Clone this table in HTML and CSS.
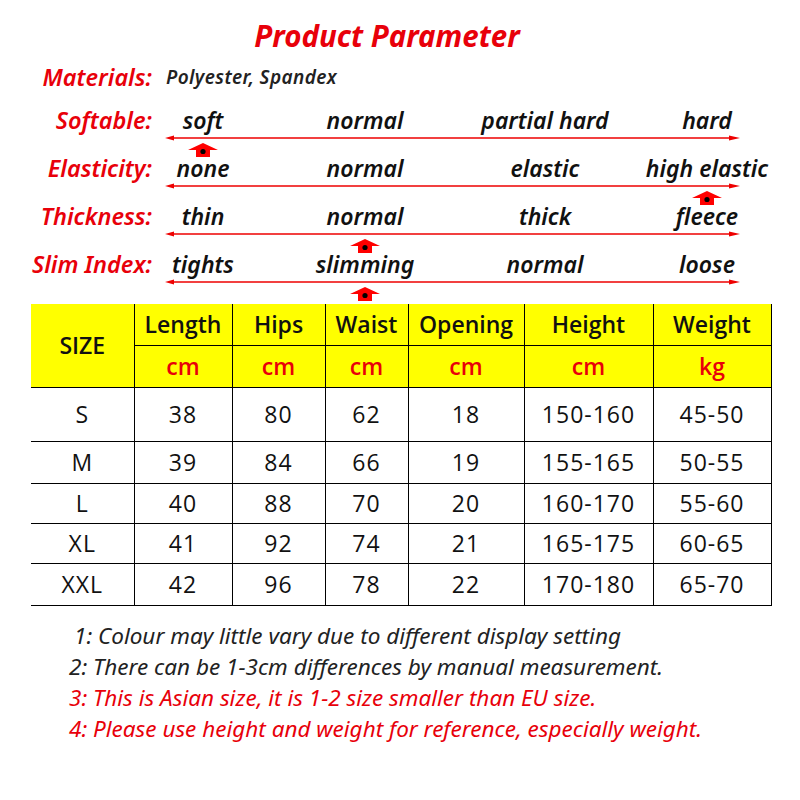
FILE: index.html
```html
<!DOCTYPE html>
<html>
<head>
<meta charset="utf-8">
<link rel="stylesheet" href="styles.css">
</head>
<body>
<div class="page">
  <h1 class="title">Product Parameter</h1>

  <div class="mat-row">
    <span class="label">Materials:</span>
    <span class="mat-value">Polyester, Spandex</span>
  </div>

  <div class="scales">
  <div class="scale-row">
    <span class="label">Softable:</span>
    <span class="val c2">soft</span>
    <span class="val c3">normal</span>
    <span class="val c4">partial hard</span>
    <span class="val c5">hard</span>
    <svg class="axis" viewBox="0 0 575 8" width="575" height="8"><line x1="6" y1="4" x2="566" y2="4" stroke="#e00" stroke-width="1.5"/><path d="M0 4 L9 1.5 L9 6.5 Z" fill="#e00"/><path d="M575 4 L564 1.5 L564 6.5 Z" fill="#e00"/></svg>
    <svg class="marker c2" viewBox="0 0 30 14" width="30" height="14"><path d="M15 0 L30 7 L22 7 L22 14 L8 14 L8 7 L0 7 Z" fill="#f00"/><circle cx="15" cy="8.5" r="2.6" fill="#000"/></svg>
  </div>

  <div class="scale-row">
    <span class="label">Elasticity:</span>
    <span class="val c2">none</span>
    <span class="val c3">normal</span>
    <span class="val c4">elastic</span>
    <span class="val c5">high elastic</span>
    <svg class="axis" viewBox="0 0 575 8" width="575" height="8"><line x1="6" y1="4" x2="566" y2="4" stroke="#e00" stroke-width="1.5"/><path d="M0 4 L9 1.5 L9 6.5 Z" fill="#e00"/><path d="M575 4 L564 1.5 L564 6.5 Z" fill="#e00"/></svg>
    <svg class="marker c5" viewBox="0 0 30 14" width="30" height="14"><path d="M15 0 L30 7 L22 7 L22 14 L8 14 L8 7 L0 7 Z" fill="#f00"/><circle cx="15" cy="8.5" r="2.6" fill="#000"/></svg>
  </div>

  <div class="scale-row">
    <span class="label">Thickness:</span>
    <span class="val c2">thin</span>
    <span class="val c3">normal</span>
    <span class="val c4">thick</span>
    <span class="val c5">fleece</span>
    <svg class="axis" viewBox="0 0 575 8" width="575" height="8"><line x1="6" y1="4" x2="566" y2="4" stroke="#e00" stroke-width="1.5"/><path d="M0 4 L9 1.5 L9 6.5 Z" fill="#e00"/><path d="M575 4 L564 1.5 L564 6.5 Z" fill="#e00"/></svg>
    <svg class="marker c3" viewBox="0 0 30 14" width="30" height="14"><path d="M15 0 L30 7 L22 7 L22 14 L8 14 L8 7 L0 7 Z" fill="#f00"/><circle cx="15" cy="8.5" r="2.6" fill="#000"/></svg>
  </div>

  <div class="scale-row">
    <span class="label">Slim Index:</span>
    <span class="val c2">tights</span>
    <span class="val c3">slimming</span>
    <span class="val c4">normal</span>
    <span class="val c5">loose</span>
    <svg class="axis" viewBox="0 0 575 8" width="575" height="8"><line x1="6" y1="4" x2="566" y2="4" stroke="#e00" stroke-width="1.5"/><path d="M0 4 L9 1.5 L9 6.5 Z" fill="#e00"/><path d="M575 4 L564 1.5 L564 6.5 Z" fill="#e00"/></svg>
    <svg class="marker c3" viewBox="0 0 30 14" width="30" height="14"><path d="M15 0 L30 7 L22 7 L22 14 L8 14 L8 7 L0 7 Z" fill="#f00"/><circle cx="15" cy="8.5" r="2.6" fill="#000"/></svg>
  </div>
  </div>

  <table class="size-table">
    <colgroup>
      <col class="w1"><col class="w2"><col class="w3"><col class="w4"><col class="w5"><col class="w6"><col class="w7">
    </colgroup>
    <thead>
      <tr class="h1">
        <th rowspan="2">SIZE</th><th>Length</th><th>Hips</th><th>Waist</th><th>Opening</th><th>Height</th><th>Weight</th>
      </tr>
      <tr class="h2">
        <th class="unit">cm</th><th class="unit">cm</th><th class="unit">cm</th><th class="unit">cm</th><th class="unit">cm</th><th class="unit">kg</th>
      </tr>
    </thead>
    <tbody>
      <tr class="r-s"><td>S</td><td>38</td><td>80</td><td>62</td><td>18</td><td>150-160</td><td>45-50</td></tr>
      <tr class="r-m"><td>M</td><td>39</td><td>84</td><td>66</td><td>19</td><td>155-165</td><td>50-55</td></tr>
      <tr class="r-n"><td>L</td><td>40</td><td>88</td><td>70</td><td>20</td><td>160-170</td><td>55-60</td></tr>
      <tr class="r-n"><td>XL</td><td>41</td><td>92</td><td>74</td><td>21</td><td>165-175</td><td>60-65</td></tr>
      <tr class="r-l"><td>XXL</td><td>42</td><td>96</td><td>78</td><td>22</td><td>170-180</td><td>65-70</td></tr>
    </tbody>
  </table>

  <div class="notes">
    <p class="note n1">1: Colour may little vary due to different display setting</p>
    <p class="note">2: There can be 1-3cm differences by manual measurement.</p>
    <p class="note red">3: This is Asian size, it is 1-2 size smaller than EU size.</p>
    <p class="note red">4: Please use height and weight for reference, especially weight.</p>
  </div>
</div>
</body>
</html>
```

FILE: styles.css
```css
html, body {
  margin: 0;
  padding: 0;
  background: #fff;
}
body {
  font-family: "Noto Sans", "Open Sans", sans-serif;
  width: 800px;
  height: 800px;
  overflow: hidden;
}
.page {
  padding-top: 18px;
}
.title {
  margin: 0;
  text-align: center;
  font-size: 29.5px;
  line-height: 36px;
  font-weight: 700;
  font-style: italic;
  color: #e8000a;
  transform: translateX(-13px);
}
.mat-row {
  display: grid;
  grid-template-columns: 152px auto;
  align-items: center;
  margin-top: 6px;
  height: 34px;
}
.label {
  text-align: right;
  font-weight: 600;
  font-style: italic;
  font-size: 23.5px;
  color: #e8000a;
  white-space: nowrap;
}
.mat-value {
  padding-left: 14px;
  font-style: italic;
  font-weight: 600;
  font-size: 19px;
  letter-spacing: 0.4px;
  color: #222;
}
.scales {
  padding-top: 12px;
}
.scale-row {
  display: grid;
  grid-template-columns: 152px 102px 222px 138px 186px;
  grid-template-rows: 28px 8px 12px;
  align-items: center;
  height: 48px;
}
.scale-row .label {
  grid-row: 1;
  grid-column: 1;
}
.val {
  grid-row: 1;
  text-align: center;
  font-style: italic;
  font-weight: 600;
  font-size: 23px;
  color: #111;
  white-space: nowrap;
}
.c2 { grid-column: 2; }
.c3 { grid-column: 3; }
.c4 { grid-column: 4; }
.c5 { grid-column: 5; }
.axis {
  grid-row: 2;
  grid-column: 2 / 6;
  margin-left: 13px;
  display: block;
}
.marker {
  grid-row: 3;
  justify-self: center;
  align-self: start;
  margin-top: 1px;
  display: block;
}
.size-table {
  margin-top: 6px;
  margin-left: 31px;
  border-collapse: collapse;
  table-layout: fixed;
  width: 740px;
  font-family: "Open Sans", "Noto Sans", sans-serif;
}
.w1 { width: 103px; }
.w2 { width: 98px; }
.w3 { width: 93px; }
.w4 { width: 83px; }
.w5 { width: 116px; }
.w6 { width: 129px; }
.w7 { width: 118px; }
.size-table th,
.size-table td {
  border: 1.5px solid #000;
  text-align: center;
  padding: 0;
  font-size: 23px;
  color: #111;
}
.size-table tr:first-child th:first-child,
.size-table tbody td:first-child {
  border-left: none;
}
.size-table thead tr.h1 th {
  border-top: none;
}
.size-table th {
  background: #ffff00;
  font-weight: 600;
}
.size-table th.unit {
  color: #e8000a;
  font-weight: 600;
}
.h1 { height: 41px; }
.h2 { height: 42px; }
.r-s { height: 54px; }
.r-m { height: 42px; }
.r-n { height: 40px; }
.r-l { height: 42px; }
.size-table td {
  font-weight: 500;
  letter-spacing: 1px;
}
.notes {
  padding-top: 14px;
  padding-left: 69px;
}
.note {
  margin: 0;
  font-style: italic;
  font-size: 22.5px;
  line-height: 31px;
  color: #222;
  white-space: nowrap;
}
.note.n1 { padding-left: 5px; }
.note.red { color: #e8000a; }
```
